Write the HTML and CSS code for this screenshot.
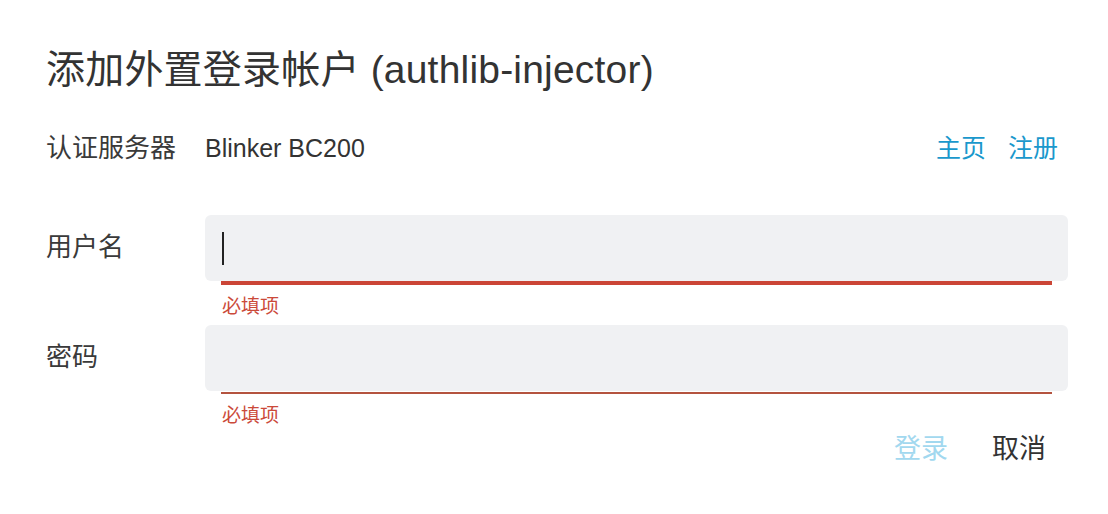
FILE: index.html
```html
<!DOCTYPE html>
<html lang="zh-CN">
<head>
<meta charset="utf-8">
<title>添加外置登录帐户</title>
<link rel="stylesheet" href="styles.css">
</head>
<body>
<div class="dialog">
  <h1 class="title">添加外置登录帐户 (authlib-injector)</h1>
  <div class="form">
    <div class="label server-label">认证服务器</div>
    <div class="server-row">
      <span class="server-name">Blinker BC200</span>
      <span class="links"><a class="link">主页</a><a class="link">注册</a></span>
    </div>

    <div class="label field-label">用户名</div>
    <div class="field">
      <div class="input"><span class="caret"></span></div>
      <div class="underline focused"></div>
      <div class="error">必填项</div>
    </div>

    <div class="label field-label">密码</div>
    <div class="field">
      <div class="input"></div>
      <div class="underline"></div>
      <div class="error">必填项</div>
    </div>
  </div>
  <div class="actions">
    <button class="btn btn-login">登录</button>
    <button class="btn btn-cancel">取消</button>
  </div>
</div>
</body>
</html>
```

FILE: styles.css
```css
html, body {
  margin: 0;
  padding: 0;
  background: #ffffff;
}

body {
  font-family: "Liberation Sans", "Noto Sans CJK SC", sans-serif;
  color: #333333;
}

.dialog {
  padding: 47px 40px 0 46px;
}

.title {
  margin: 0;
  font-size: 39px;
  font-weight: normal;
  line-height: 46px;
  color: #333333;
  letter-spacing: 0.2px;
}

.form {
  display: grid;
  grid-template-columns: 159px 1fr;
  align-items: start;
  margin-top: 39px;
}

.label {
  font-size: 26px;
  line-height: 32px;
  color: #3a3a3a;
  white-space: nowrap;
}

.server-row {
  display: flex;
  justify-content: space-between;
  align-items: center;
  font-size: 25px;
  line-height: 32px;
  margin-bottom: 51px;
}

.server-name {
  color: #333333;
}

.links {
  display: flex;
  gap: 2px;
}

.link {
  padding: 0 10px;
  color: #1a98cc;
  font-size: 25px;
  cursor: pointer;
}

.field-label {
  margin-top: 16px;
}

.field {
  display: flex;
  flex-direction: column;
}

.input {
  height: 66px;
  background: #f0f1f3;
  border-radius: 6px;
  display: flex;
  align-items: center;
  padding-left: 17px;
}

.caret {
  width: 2px;
  height: 33px;
  background: #222222;
}

.underline {
  margin: 1px 16px 0 16px;
  height: 2px;
  background: #b4533f;
}

.underline.focused {
  margin-top: 0;
  height: 4px;
  background: #cb4536;
}

.error {
  padding-left: 17px;
  font-size: 19px;
  line-height: 24px;
  margin-top: 8px;
  margin-bottom: 8px;
  color: #cb4a3a;
  font-family: "Noto Sans CJK SC", sans-serif;
}

.actions {
  display: flex;
  justify-content: flex-end;
  margin-top: -5px;
}

.btn {
  border: none;
  background: transparent;
  font-family: "Noto Sans CJK SC", sans-serif;
  font-size: 27px;
  line-height: 36px;
  padding: 0 22px;
  cursor: pointer;
}

.btn-login {
  color: #a2d8ef;
}

.btn-cancel {
  color: #333333;
  padding-right: 22px;
}
```
